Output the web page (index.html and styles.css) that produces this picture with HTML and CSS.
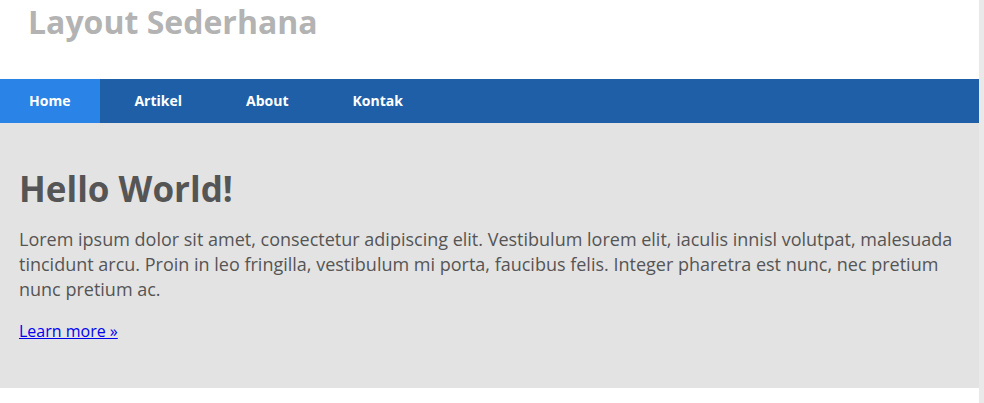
FILE: index.html
```html
<!DOCTYPE html>
<html lang="id">
<head>
<meta charset="utf-8">
<title>Layout Sederhana</title>
<link rel="stylesheet" href="styles.css">
</head>
<body>
<div class="page">
  <header class="header">
    <h1 class="brand">Layout Sederhana</h1>
  </header>
  <nav class="nav">
    <a class="nav-item active" href="#">Home</a>
    <a class="nav-item" href="#">Artikel</a>
    <a class="nav-item" href="#">About</a>
    <a class="nav-item" href="#">Kontak</a>
  </nav>
  <section class="jumbotron">
    <h2 class="jumbo-title">Hello World!</h2>
    <p class="jumbo-text">Lorem ipsum dolor sit amet, consectetur adipiscing elit. Vestibulum lorem elit, iaculis innisl volutpat, malesuada tincidunt arcu. Proin in leo fringilla, vestibulum mi porta, faucibus felis. Integer pharetra est nunc, nec pretium nunc pretium ac.</p>
    <a class="learn" href="#">Learn more »</a>
  </section>
</div>
</body>
</html>
```
FILE: styles.css
```css
html {
  background: #e9e9e9;
}
body {
  margin: 0;
  font-family: "Open Sans", "Liberation Sans", sans-serif;
}
.page {
  width: 979px;
  min-height: 100vh;
  background: #ffffff;
}
.header {
  height: 79px;
  padding-left: 28px;
}
.brand {
  margin: 0;
  font-size: 32px;
  font-weight: 700;
  color: #b3b3b3;
  line-height: normal;
}
.nav {
  display: flex;
  gap: 5px;
  height: 44px;
  background: #1f5fa8;
}
.nav-item {
  display: block;
  padding: 0 30px 0 29px;
  line-height: 44px;
  font-size: 14px;
  font-weight: 700;
  color: #ffffff;
  text-decoration: none;
}
.nav-item.active {
  background: #2a83e6;
}
.jumbotron {
  background: #e3e3e3;
  padding: 42px 19px 0;
  height: 265px;
  box-sizing: border-box;
  color: #555555;
}
.jumbo-title {
  margin: 0 0 15px;
  font-size: 35px;
  font-weight: 700;
  line-height: normal;
  color: #555555;
}
.jumbo-text {
  margin: 0 0 18px;
  font-size: 18px;
  line-height: 25px;
}
.learn {
  font-size: 16px;
  color: #0000ee;
  text-decoration: underline;
}
```
